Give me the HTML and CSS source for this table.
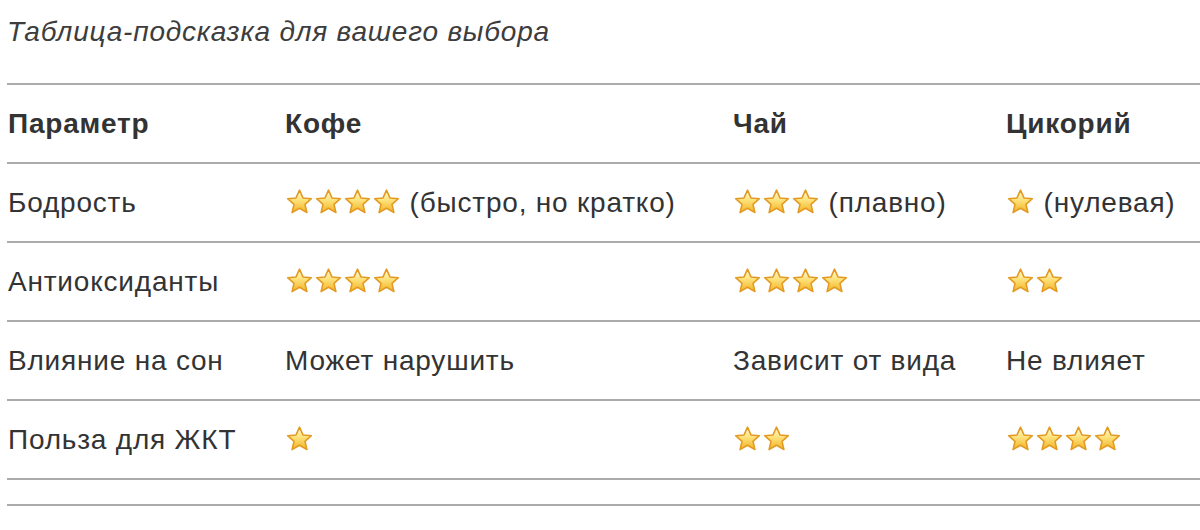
FILE: index.html
```html
<!DOCTYPE html>
<html lang="ru">
<head>
<meta charset="utf-8">
<link rel="stylesheet" href="styles.css">
</head>
<body>
<svg class="defs" width="0" height="0" aria-hidden="true">
  <defs>
    <linearGradient id="sg" x1="0" y1="0" x2="0" y2="1">
      <stop offset="0" stop-color="#fffbe0"/>
      <stop offset="0.45" stop-color="#fde27a"/>
      <stop offset="1" stop-color="#f3b224"/>
    </linearGradient>
    <symbol id="star" viewBox="0 0 30 28">
      <path d="M15 2.2 L18.6 10.3 L27.3 11.1 L20.7 16.9 L22.7 25.5 L15 21 L7.3 25.5 L9.3 16.9 L2.7 11.1 L11.4 10.3 Z" fill="url(#sg)" stroke="#e39a22" stroke-width="1.6" stroke-linejoin="round"/>
    </symbol>
  </defs>
</svg>
<main class="page">
  <p class="caption">Таблица-подсказка для вашего выбора</p>
  <table class="grid">
    <thead>
      <tr>
        <th class="c1">Параметр</th>
        <th class="c2">Кофе</th>
        <th class="c3">Чай</th>
        <th class="c4">Цикорий</th>
      </tr>
    </thead>
    <tbody>
      <tr>
        <td>Бодрость</td>
        <td><span class="stars"><svg class="s"><use href="#star"/></svg><svg class="s"><use href="#star"/></svg><svg class="s"><use href="#star"/></svg><svg class="s"><use href="#star"/></svg></span> (быстро, но кратко)</td>
        <td><span class="stars"><svg class="s"><use href="#star"/></svg><svg class="s"><use href="#star"/></svg><svg class="s"><use href="#star"/></svg></span> (плавно)</td>
        <td><span class="stars"><svg class="s"><use href="#star"/></svg></span> (нулевая)</td>
      </tr>
      <tr>
        <td>Антиоксиданты</td>
        <td><span class="stars"><svg class="s"><use href="#star"/></svg><svg class="s"><use href="#star"/></svg><svg class="s"><use href="#star"/></svg><svg class="s"><use href="#star"/></svg></span></td>
        <td><span class="stars"><svg class="s"><use href="#star"/></svg><svg class="s"><use href="#star"/></svg><svg class="s"><use href="#star"/></svg><svg class="s"><use href="#star"/></svg></span></td>
        <td><span class="stars"><svg class="s"><use href="#star"/></svg><svg class="s"><use href="#star"/></svg></span></td>
      </tr>
      <tr>
        <td>Влияние на сон</td>
        <td>Может нарушить</td>
        <td>Зависит от вида</td>
        <td>Не влияет</td>
      </tr>
      <tr>
        <td>Польза для ЖКТ</td>
        <td><span class="stars"><svg class="s"><use href="#star"/></svg></span></td>
        <td><span class="stars"><svg class="s"><use href="#star"/></svg><svg class="s"><use href="#star"/></svg></span></td>
        <td><span class="stars"><svg class="s"><use href="#star"/></svg><svg class="s"><use href="#star"/></svg><svg class="s"><use href="#star"/></svg><svg class="s"><use href="#star"/></svg></span></td>
      </tr>
    </tbody>
  </table>
  <div class="endrule"></div>
</main>
</body>
</html>
```

FILE: styles.css
```css
html, body {
  margin: 0;
  padding: 0;
  background: #ffffff;
  overflow: hidden;
}
body {
  font-family: "Liberation Sans", Arial, sans-serif;
  color: #333333;
}
.defs {
  position: absolute;
  width: 0;
  height: 0;
}
.page {
  padding-left: 7px;
}
.caption {
  margin: 0;
  padding-top: 17px;
  height: 83px;
  box-sizing: border-box;
  font-style: italic;
  font-size: 28px;
  letter-spacing: 0.8px;
  line-height: 30px;
  color: #3d3d3d;
}
.grid {
  border-collapse: collapse;
  width: 1220px;
  table-layout: fixed;
  font-size: 28px;
  letter-spacing: 0.8px;
}
.grid tr {
  border-top: 2px solid #ababab;
}
.grid tbody tr:last-child {
  border-bottom: 2px solid #ababab;
}
.grid th, .grid td {
  text-align: left;
  padding: 0 0 0 1px;
  height: 77px;
  vertical-align: middle;
  white-space: nowrap;
  line-height: 30px;
}
.grid th {
  font-weight: bold;
  color: #333333;
}
.c1 { width: 276px; }
.c2 { width: 447px; }
.c3 { width: 272px; }
.stars {
  display: inline-flex;
  vertical-align: -3px;
  gap: 0;
}
.s {
  width: 29px;
  height: 27px;
  display: block;
}
.endrule {
  margin-top: 24px;
  width: 1220px;
  border-top: 2px solid #ababab;
}
```
